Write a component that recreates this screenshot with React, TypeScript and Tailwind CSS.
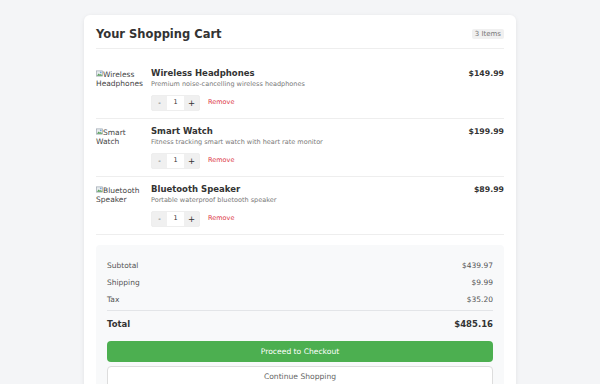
import React, { useState } from "react";

type Item = { id: number; name: string; alt: [string, string]; desc: string; price: number; qty: number };

const initial: Item[] = [
  { id: 1, name: "Wireless Headphones", alt: ["Wireless", "Headphones"], desc: "Premium noise-cancelling wireless headphones", price: 149.99, qty: 1 },
  { id: 2, name: "Smart Watch", alt: ["Smart", "Watch"], desc: "Fitness tracking smart watch with heart rate monitor", price: 199.99, qty: 1 },
  { id: 3, name: "Bluetooth Speaker", alt: ["Bluetooth", "Speaker"], desc: "Portable waterproof bluetooth speaker", price: 89.99, qty: 1 },
];

function BrokenImg() {
  return (
    <svg width="7" height="7" viewBox="0 0 16 16" className="inline-block align-[0px]">
      <rect x="1" y="2" width="14" height="12" fill="#e8ecef" stroke="#9aa4ad" strokeWidth="1.5" />
      <path d="M2 13l4-5 3 3 2-2 4 4z" fill="#5aa05a" />
      <circle cx="11" cy="5.5" r="1.8" fill="#6fa0d8" />
    </svg>
  );
}

export default function App() {
  const [items, setItems] = useState<Item[]>(initial);

  const change = (id: number, d: number) =>
    setItems(items.map((i) => (i.id === id ? { ...i, qty: Math.max(1, i.qty + d) } : i)));

  const subtotal = items.reduce((s, i) => s + i.price * i.qty, 0);
  const shipping = 9.99;
  const tax = 35.2;
  const total = subtotal + shipping + tax;

  return (
    <div className="min-h-screen bg-[#f4f5f7] pt-[15px] font-['DejaVu_Sans',sans-serif] text-[#333]">
      <div className="mx-auto w-[432px] bg-white rounded-md shadow-[0_1px_4px_rgba(0,0,0,0.08)] px-3 pt-[10px] pb-4">
        <div className="flex items-center justify-between border-b border-[#eee] pb-[5px]">
          <h1 className="text-[11.5px] leading-[18px] font-bold text-[#333]">Your Shopping Cart</h1>
          <span className="bg-[#f0f0f0] text-[#777] text-[7px] leading-[10px] px-[3px] rounded-[2px]">3 Items</span>
        </div>

        <div className="mt-3">
          {items.map((item) => (
            <div key={item.id} className="flex border-b border-[#eee] pt-[7px] pb-[7px]">
              <div className="w-[55px] shrink-0 mt-[2px] text-[7.5px] leading-[9px] text-[#444]">
                <div><BrokenImg />{item.alt[0]}</div>
                <div>{item.alt[1]}</div>
              </div>
              <div className="flex-1">
                <div className="text-[8.5px] leading-[11px] font-bold text-[#333]">{item.name}</div>
                <div className="text-[6.5px] leading-[11px] text-[#777]">{item.desc}</div>
                <div className="mt-[5px] flex items-center">
                  <div className="flex h-[16px] rounded-[2px] border border-[#eee] bg-[#f0f0f0]">
                    <button onClick={() => change(item.id, -1)} className="w-[15px] text-[7px] text-[#333]">-</button>
                    <div className="w-[17px] bg-white flex items-center justify-center text-[6.5px]">{item.qty}</div>
                    <button onClick={() => change(item.id, 1)} className="w-[15px] text-[8.5px] text-[#333]">+</button>
                  </div>
                  <button className="ml-[8px] text-[6.5px] text-[#dc3545]">Remove</button>
                </div>
              </div>
              <div className="text-[7.8px] leading-[11px] font-bold text-[#333]">${item.price.toFixed(2)}</div>
            </div>
          ))}
        </div>

        <div className="mt-[10px] bg-[#f8f9fa] rounded-sm px-[11px] pt-[15px] pb-[10px]">
          <div className="flex flex-col gap-[6px] text-[7.5px] leading-[11px] text-[#555]">
            <div className="flex justify-between"><span>Subtotal</span><span>${subtotal.toFixed(2)}</span></div>
            <div className="flex justify-between"><span>Shipping</span><span>${shipping.toFixed(2)}</span></div>
            <div className="flex justify-between"><span>Tax</span><span>${tax.toFixed(2)}</span></div>
          </div>
          <div className="border-t border-[#e3e5e8] mt-[5px] pt-[7px] flex justify-between text-[8.5px] leading-[13px] font-bold text-[#333]">
            <span>Total</span>
            <span>${total.toFixed(2)}</span>
          </div>
          <button className="mt-[10px] w-full h-[21px] rounded-sm bg-[#4caf50] text-white text-[7.6px]">Proceed to Checkout</button>
          <button className="mt-[3px] w-full h-[22px] rounded-sm bg-white border border-[#ddd] text-[#666] text-[7.6px]">Continue Shopping</button>
        </div>
      </div>
    </div>
  );
}
